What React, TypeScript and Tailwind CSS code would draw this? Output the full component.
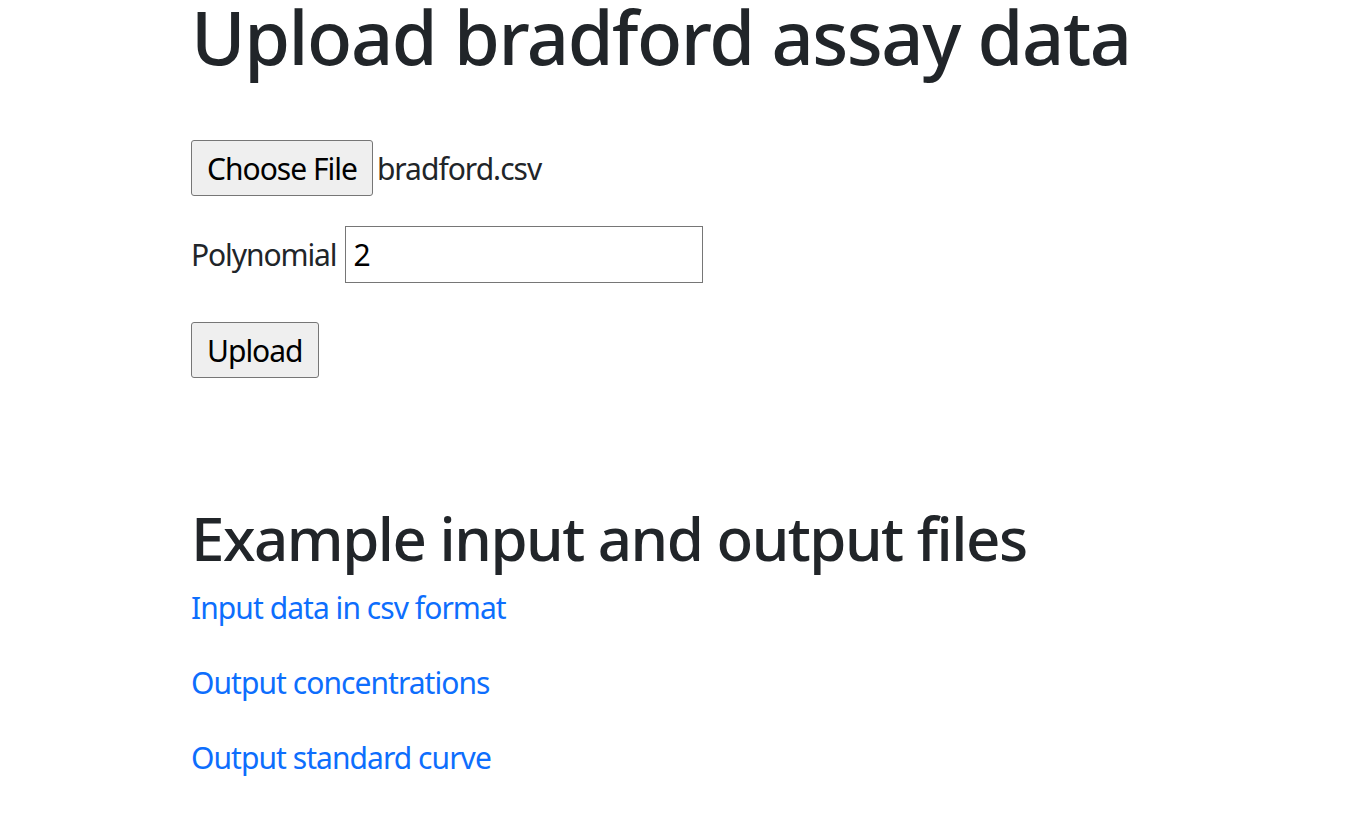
import React from "react";

export default function App() {
  return (
    <div className="min-h-[833px] bg-white font-['Noto_Sans','Open_Sans',sans-serif] text-[#212529]">
      <div className="mx-auto w-[1012px] px-[22px]">
        <h1 className="text-[74px] font-medium leading-[74px] tracking-[-1.45px]">
          Upload bradford assay data
        </h1>

        <div className="mt-[66px] flex h-[56px] items-center">
          <button className="flex h-[56px] items-center rounded-[3px] border border-[#767676] bg-[#efefef] px-[15px] text-[30px] tracking-[-1px] text-black">
            Choose File
          </button>
          <span className="ml-[4px] text-[30px] tracking-[-1px]">bradford.csv</span>
        </div>

        <div className="mt-[30px] flex h-[57px] items-center">
          <span className="mr-[9px] text-[30px] tracking-[-1.1px]">Polynomial</span>
          <input
            className="h-[57px] w-[358px] border border-[#767676] bg-white px-[7px] text-[30px] text-black outline-none"
            defaultValue="2"
          />
        </div>

        <div className="mt-[39px] flex h-[56px] items-center">
          <button className="flex h-[56px] items-center rounded-[3px] border border-[#767676] bg-[#efefef] px-[15px] text-[30px] tracking-[-1px] text-black">
            Upload
          </button>
        </div>

        <h2 className="mt-[124px] text-[60px] font-medium leading-[72px] tracking-[-1.5px]">
          Example input and output files
        </h2>

        <div className="mt-[13px] flex flex-col text-[30px] leading-[41px] tracking-[-0.95px]">
          <a href="#" className="text-[#0d6efd]">Input data in csv format</a>
          <a href="#" className="mt-[34px] text-[#0d6efd]">Output concentrations</a>
          <a href="#" className="mt-[34px] text-[#0d6efd]">Output standard curve</a>
        </div>
      </div>
    </div>
  );
}
